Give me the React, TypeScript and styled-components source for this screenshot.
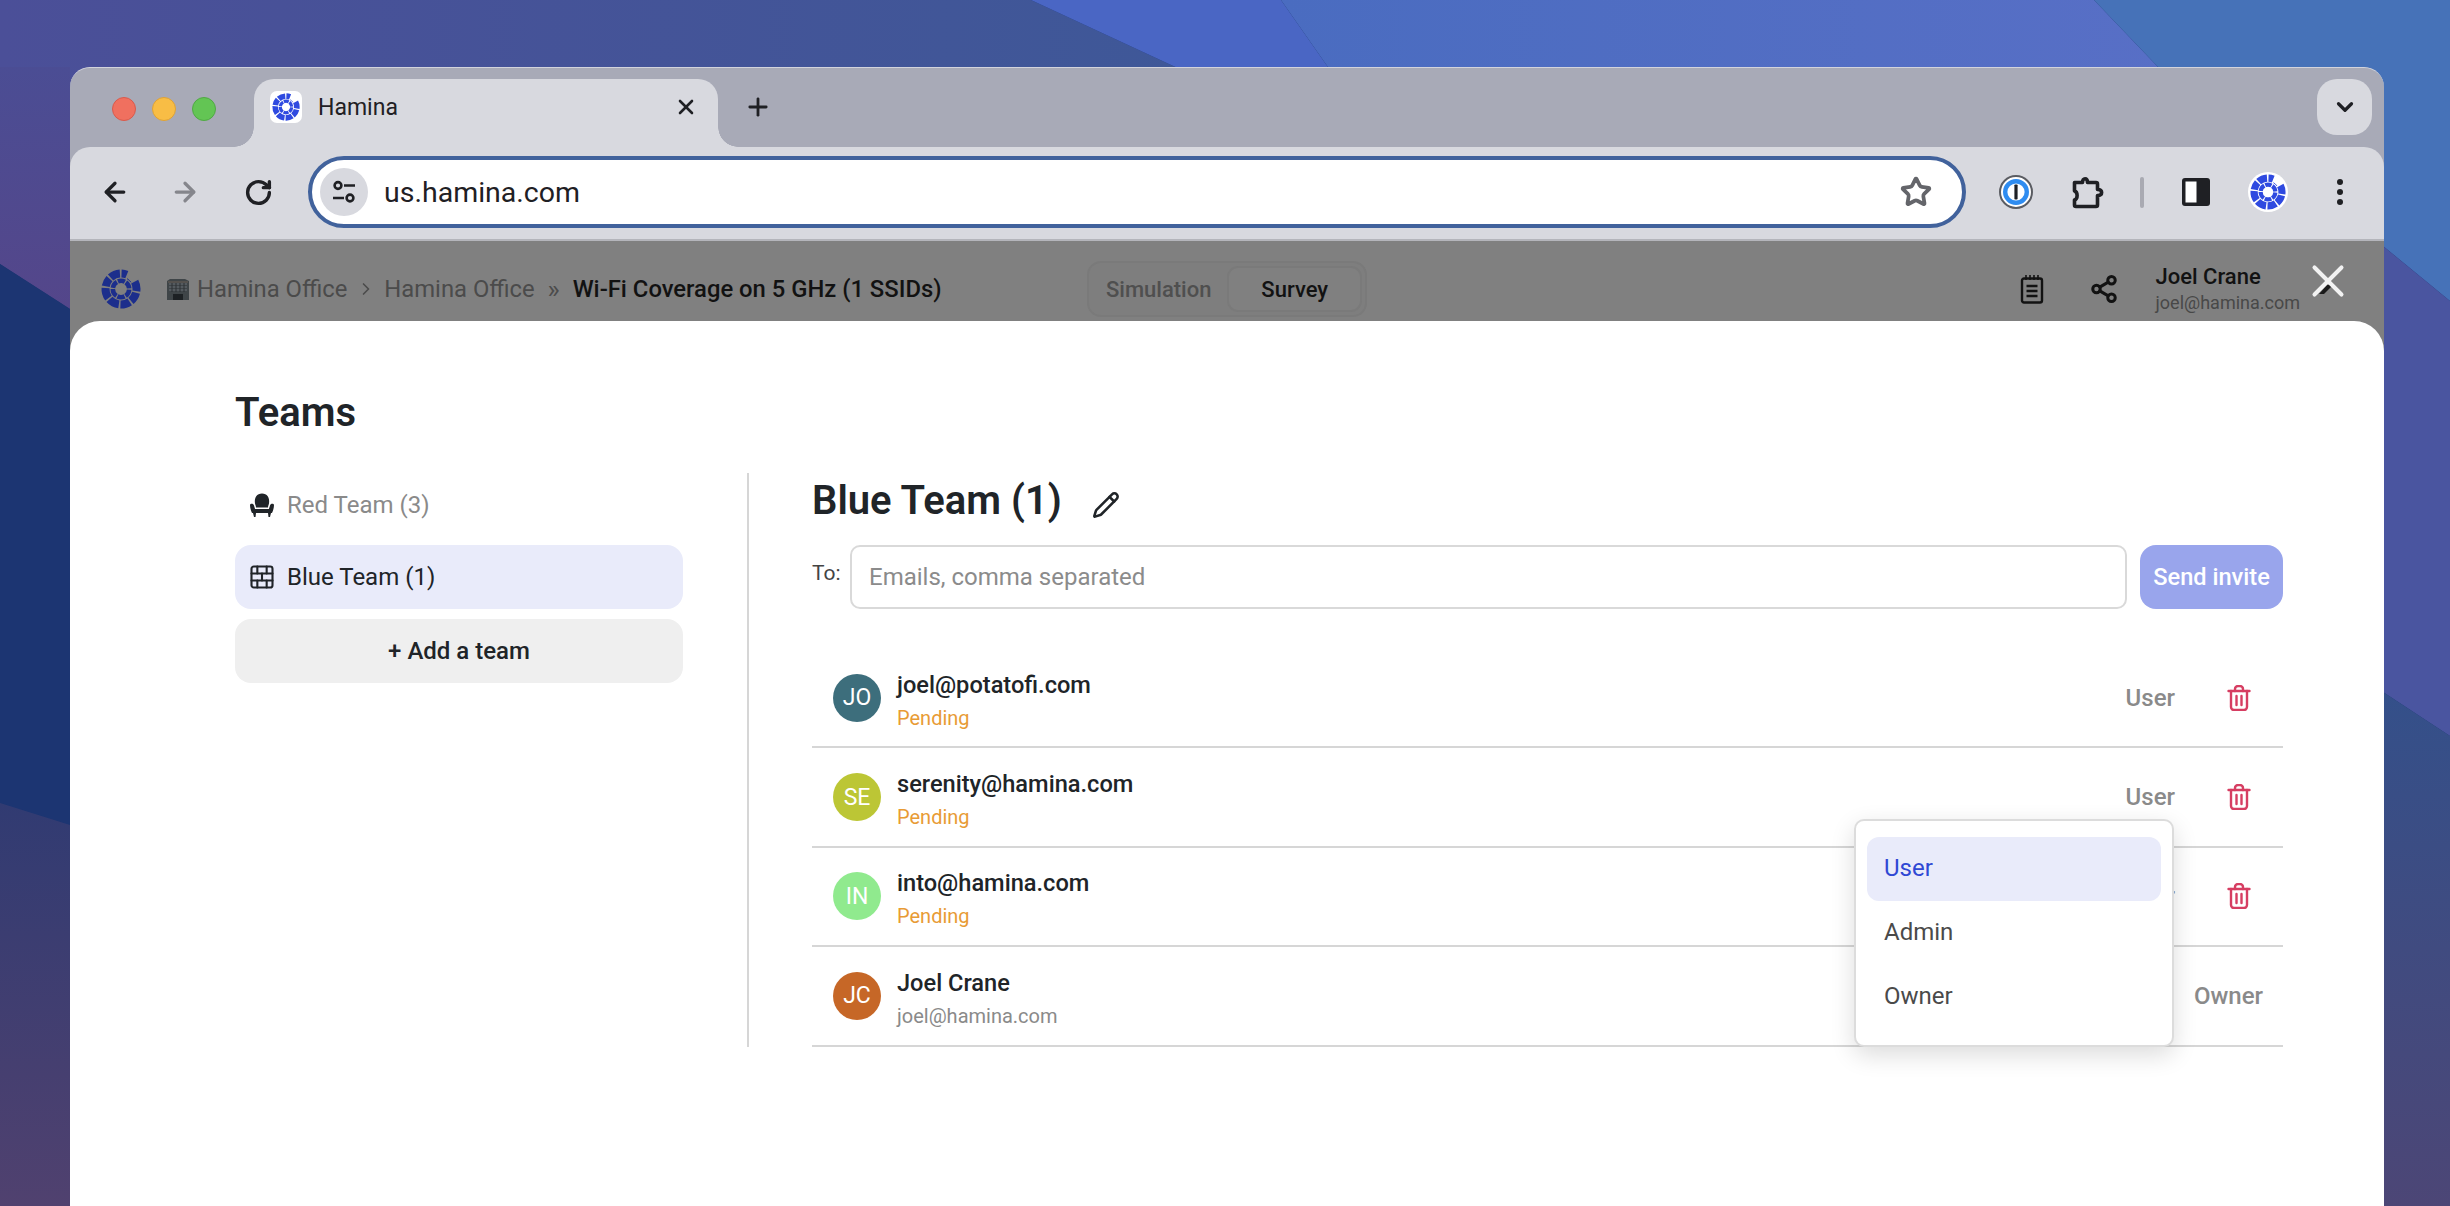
import React from "react";
import styled, { createGlobalStyle } from "styled-components";
import { ArrowLeft, ArrowRight, RotateCw, Star, X, Plus, ChevronDown, ChevronRight, Pencil, Share2, BrickWall } from "lucide-react";

const Global = createGlobalStyle`
  html, body { margin: 0; padding: 0; background: #1c3572; }
  * { box-sizing: border-box; }
  body { font-family: Roboto, "Liberation Sans", sans-serif; }
`;

const Desktop = styled.div`
  position: relative;
  width: 2450px;
  height: 1206px;
  overflow: hidden;
  padding: 67px 66px 0 70px;
`;
const WallpaperSvg = styled.svg`
  position: absolute;
  inset: 0;
`;
const Window = styled.div`
  position: relative;
  width: 2314px;
  height: 1139px;
  display: flex;
  flex-direction: column;
  background: #a8aab7;
  border-top: 1px solid #d3d4dc;
  border-radius: 20px 20px 0 0;
  overflow: hidden;
`;
const TabStrip = styled.div`
  height: 79px;
  flex: none;
  display: flex;
  align-items: flex-start;
  padding: 11px 12px 0 42px;
`;
const Lights = styled.div`
  display: flex;
  gap: 16px;
  margin-top: 18px;
`;
const Light = styled.span<{ $c: string; $b: string }>`
  width: 24px;
  height: 24px;
  border-radius: 50%;
  background: ${(p) => p.$c};
  border: 1px solid ${(p) => p.$b};
`;
const Tab = styled.div`
  position: relative;
  z-index: 1;
  width: 464px;
  height: 68px;
  margin-left: 38px;
  padding: 0 20px 12px 16px;
  display: flex;
  align-items: center;
  background: #d8d9df;
  border-radius: 20px 20px 0 0;
  color: #1f2024;
  font-size: 23px;
  &::before, &::after {
    content: "";
    position: absolute;
    bottom: 0;
    width: 20px;
    height: 20px;
  }
  &::before { left: -20px; background: radial-gradient(circle at 0 0, #a8aab7 19.5px, #d8d9df 20px); }
  &::after { right: -20px; background: radial-gradient(circle at 100% 0, #a8aab7 19.5px, #d8d9df 20px); }
`;
const Favicon = styled.span<{ $round?: boolean }>`
  width: ${(p) => (p.$round ? 40 : 32)}px;
  height: ${(p) => (p.$round ? 40 : 32)}px;
  border-radius: ${(p) => (p.$round ? "50%" : "7px")};
  background: #fff;
  display: flex;
  align-items: center;
  justify-content: center;
  flex: none;
`;
const TabTitle = styled.span`
  margin-left: 16px;
  flex: 1;
`;
const NewTab = styled.span`
  margin: 14px 0 0 26px;
  height: 28px;
  display: flex;
  align-items: center;
  color: #1f2024;
`;
const TabSearch = styled.span`
  margin-left: auto;
  width: 55px;
  height: 56px;
  border-radius: 20px;
  background: #d8d9df;
  display: flex;
  align-items: center;
  justify-content: center;
  color: #1f2024;
`;
const Toolbar = styled.div`
  position: relative;
  height: 94px;
  flex: none;
  display: flex;
  align-items: center;
  padding: 0 0 2px 17px;
  background: #d8d9df;
  border-bottom: 2px solid #b4b5bb;
  border-radius: 20px 20px 0 0;
`;
const NavButton = styled.span<{ $c?: string; $ml?: number }>`
  width: 56px;
  height: 56px;
  display: flex;
  align-items: center;
  justify-content: center;
  color: ${(p) => p.$c || "#1f2024"};
  margin-left: ${(p) => p.$ml || 0}px;
`;
const Omnibox = styled.div`
  width: 1658px;
  height: 72px;
  margin-left: 22px;
  border: 4px solid #41629c;
  border-radius: 36px;
  background: #fff;
  display: flex;
  align-items: center;
  padding: 0 30px 0 8px;
`;
const SiteChip = styled.span`
  width: 48px;
  height: 48px;
  border-radius: 50%;
  background: #d8d9df;
  display: flex;
  align-items: center;
  justify-content: center;
  flex: none;
`;
const UrlText = styled.span`
  margin-left: 16px;
  flex: 1;
  font-size: 28.500px;
  color: #1f2024;
`;
const ToolSlots = styled.div`
  display: flex;
  align-items: center;
  margin-left: 14px;
`;
const ToolSlot = styled.span`
  width: 72px;
  height: 56px;
  display: flex;
  align-items: center;
  justify-content: center;
  color: #1f2024;
`;
const ToolSep = styled.span`
  width: 4px;
  height: 31px;
  background: #a9aab2;
  border-radius: 2px;
  margin: 0 16px;
`;
const AppBody = styled.div`
  flex: 1;
  display: flex;
  flex-direction: column;
  background: #808080;
  min-height: 0;
`;
const AppHeader = styled.header`
  position: relative;
  height: 80px;
  flex: none;
  display: flex;
  align-items: center;
  padding: 16px 84px 0 31px;
`;
const Crumbs = styled.div`
  display: flex;
  align-items: center;
  margin-left: 25px;
  font-size: 23.800px;
  color: #4b4b4b;
  width: 777px;
  flex: none;
  white-space: nowrap;
`;
const CrumbLabel = styled.span<{ $ml?: number }>`
  margin-left: ${(p) => p.$ml || 0}px;
  flex: none;
`;
const CrumbSep = styled.span<{ $w: number }>`
  width: ${(p) => p.$w}px;
  flex: none;
  display: flex;
  justify-content: center;
  font-size: 26px;
  line-height: 24px;
`;
const CrumbCurrent = styled.span`
  color: #121212;
  font-weight: 500;
  flex: none;
`;
const Segmented = styled.div`
  margin-left: 144px;
  width: 280px;
  height: 56px;
  padding: 3px 3px 3px 1px;
  display: flex;
  align-items: stretch;
  background: #7e7e7e;
  border: 2px solid #7a7a7a;
  border-radius: 14px;
  font-size: 22px;
  font-weight: 500;
`;
const SegItem = styled.span<{ $active?: boolean }>`
  display: flex;
  align-items: center;
  justify-content: center;
  width: ${(p) => (p.$active ? "136px" : "139px")};
  color: ${(p) => (p.$active ? "#121212" : "#4f4f4f")};
  background: ${(p) => (p.$active ? "#808080" : "transparent")};
  border: ${(p) => (p.$active ? "2px solid #7a7a7a" : "0")};
  border-radius: 11px;
`;
const HeaderActions = styled.div`
  margin-left: auto;
  display: flex;
  align-items: center;
  color: #121212;
`;
const HeaderIcon = styled.span`
  width: 72px;
  display: flex;
  justify-content: center;
`;
const HeaderUser = styled.div`
  margin-left: 16px;
  display: flex;
  flex-direction: column;
  line-height: 1;
`;
const HeaderName = styled.span`
  font-size: 22px;
  font-weight: 500;
  color: #121212;
  margin-bottom: 6px;
`;
const HeaderMail = styled.span`
  font-size: 18px;
  color: #484848;
`;
const HiddenAvatarMark = styled.span`
  position: absolute;
  right: 51px;
  top: 44px;
  width: 14px;
  height: 9px;
  display: flex;
`;
const ModalClose = styled.span`
  position: absolute;
  right: 29px;
  top: 13px;
  width: 54px;
  height: 54px;
  color: #f2f2f2;
`;
const Modal = styled.main`
  flex: 1;
  background: #fff;
  border-radius: 30px 30px 0 0;
  padding: 69px 101px 0 165px;
  color: #202428;
`;
const PageTitle = styled.h1`
  margin: 0 0 37px;
  font-size: 40px;
  line-height: 46px;
  font-weight: 600;
  color: #202428;
`;
const Columns = styled.div`
  display: flex;
  align-items: flex-start;
`;
const TeamColumn = styled.nav`
  width: 448px;
  margin-right: 64px;
  display: flex;
  flex-direction: column;
`;
const TeamItem = styled.div<{ $active?: boolean }>`
  height: 64px;
  margin-bottom: 8px;
  border-radius: 16px;
  display: flex;
  align-items: center;
  padding-left: 13px;
  gap: 11px;
  font-size: 24px;
  color: ${(p) => (p.$active ? "#202428" : "#8a8a8a")};
  background: ${(p) => (p.$active ? "#e9ebfa" : "transparent")};
`;
const AddTeam = styled.div`
  height: 64px;
  margin-top: 2px;
  border-radius: 16px;
  background: #efefef;
  display: flex;
  align-items: center;
  justify-content: center;
  font-size: 24px;
  font-weight: 500;
  color: #202428;
`;
const TeamIcon = styled.span`
  width: 28px;
  display: flex;
  justify-content: center;
  color: #202428;
`;
const TeamPane = styled.section`
  flex: 1;
  border-left: 2px solid #d6d6d6;
  padding-left: 63px;
  height: 574px;
`;
const PaneTitleRow = styled.div`
  height: 54px;
  display: flex;
  align-items: center;
  margin-bottom: 18px;
  color: #202428;
`;
const PaneTitle = styled.h2`
  margin: 1px 0 0;
  font-size: 40px;
  font-weight: 600;
  line-height: 53px;
`;
const EditIcon = styled.span`
  margin-left: 30px;
  margin-top: 10px;
  display: flex;
`;
const InviteRow = styled.div`
  height: 64px;
  display: flex;
  align-items: stretch;
`;
const ToLabel = styled.span`
  width: 38px;
  font-size: 21px;
  line-height: 57px;
  color: #444;
  height: 57px;
`;
const EmailField = styled.div`
  flex: 1;
  border: 2px solid #d9d9d9;
  border-radius: 10px;
  display: flex;
  align-items: center;
  padding-left: 17px;
  font-size: 24px;
  color: #8b8b8b;
`;
const SendButton = styled.button`
  width: 143px;
  margin-left: 13px;
  border: 0;
  border-radius: 16px;
  background: #99a5ec;
  color: #fff;
  font: 500 23.600px Roboto, sans-serif;
  padding: 0;
`;
const MemberList = styled.div`
  position: relative;
  margin-top: 40px;
`;
const MemberRow = styled.div`
  height: 99.4px;
  border-bottom: 2px solid #d6d6d6;
  display: flex;
  align-items: center;
  padding: 0 20px 0 21px;
`;
const Avatar = styled.span<{ $c: string }>`
  width: 48px;
  height: 48px;
  border-radius: 50%;
  flex: none;
  background: ${(p) => p.$c};
  color: #fff;
  display: flex;
  align-items: center;
  justify-content: center;
  font-size: 23px;
  font-weight: 400;
`;
const MemberText = styled.div`
  margin-left: 16px;
  padding-top: 8px;
  display: flex;
  flex-direction: column;
`;
const MemberName = styled.span`
  font-size: 23.600px;
  font-weight: 500;
  line-height: 30px;
  color: #202428;
`;
const MemberSub = styled.span<{ $pending?: boolean }>`
  font-size: 20px;
  line-height: 32px;
  margin-top: 2px;
  color: ${(p) => (p.$pending ? "#e89b35" : "#8a8a8a")};
`;
const Role = styled.span`
  margin-left: auto;
  font-size: 24px;
  font-weight: 500;
  color: #8a8a8a;
`;
const TrashButton = styled.span`
  width: 32px;
  margin: 0 8px 0 48px;
  display: flex;
  justify-content: center;
  color: #d63e62;
`;
const RoleMenu = styled.div`
  position: absolute;
  top: 170px;
  left: 1042px;
  width: 320px;
  height: 228px;
  padding: 16px 11px;
  background: #fff;
  border: 2px solid #dcdcdc;
  border-radius: 10px;
  box-shadow: 0 8px 24px rgba(0, 0, 0, 0.14);
`;
const RoleOption = styled.div<{ $active?: boolean }>`
  height: 64px;
  display: flex;
  align-items: center;
  padding: 0 17px 3px;
  border-radius: 12px;
  font-size: 24px;
  color: ${(p) => (p.$active ? "#2f48d4" : "#4a4a4a")};
  background: ${(p) => (p.$active ? "#e9ebfa" : "transparent")};
`;

const arc = (r: number, a0: number, a1: number) => {
  const p = (a: number) => {
    const t = ((a - 90) * Math.PI) / 180;
    return `${(20 + r * Math.cos(t)).toFixed(2)} ${(20 + r * Math.sin(t)).toFixed(2)}`;
  };
  return `M${p(a0)}A${r} ${r} 0 0 1 ${p(a1)}`;
};
const OUTER: [number, number][] = [[-42, -4], [2, 22], [62, 98], [104, 140], [146, 182], [188, 228], [234, 274], [280, 312]];
const INNER: [number, number][] = [[-22, 28], [36, 86], [94, 146], [154, 206], [214, 270], [278, 330]];

const HaminaLogo = ({ size, color }: { size: number; color: string }) => (
  <svg width={size} height={size} viewBox="0 0 40 40" fill="none" stroke={color}>
    {OUTER.map(([a, b]) => (
      <path key={`o${a}`} d={arc(15.5, a, b)} strokeWidth={8} />
    ))}
    <path d={arc(12, 30, 56)} strokeWidth={1} />
    {INNER.map(([a, b]) => (
      <path key={`i${a}`} d={arc(8.2, a, b)} strokeWidth={4.6} />
    ))}
  </svg>
);

const TuneIcon = () => (
  <svg width="32" height="32" viewBox="0 0 32 32" fill="none" stroke="#1f2024" strokeWidth="2.6">
    <circle cx="10" cy="9.5" r="3.4" />
    <path d="M16 9.5h11M5 22h11" />
    <circle cx="22" cy="22" r="3.4" />
  </svg>
);
const OnePassword = () => (
  <svg width="34" height="34" viewBox="0 0 34 34">
    <circle cx="17" cy="17" r="16" fill="#fff" stroke="#5a5c62" strokeWidth="2" />
    <circle cx="17" cy="17" r="10.8" fill="#fff" stroke="#2f8cf0" strokeWidth="4.4" />
    <rect x="15.4" y="9.5" width="3.2" height="15" rx="0.8" fill="#1f2024" />
  </svg>
);
const PuzzleIcon = () => (
  <svg width="36" height="36" viewBox="0 0 36 36" fill="none" stroke="#1f2024" strokeWidth="3.6" strokeLinejoin="round">
    <path d="M4.500 8.500h8c0-5 5-5 5 0h8.500a1.500 1.500 0 0 1 1.500 1.500v5.500c5.500 0 5.500 6 0 6v9.500a1.500 1.500 0 0 1-1.500 1.500H6a1.500 1.500 0 0 1-1.500-1.500v-5c3.500-1 3.500-8 0-9z" />
  </svg>
);
const SidePanelIcon = () => (
  <svg width="30" height="30" viewBox="0 0 30 30">
    <rect x="1" y="1" width="28" height="28" rx="3" fill="#1f2024" />
    <rect x="4.500" y="4.500" width="11" height="21" fill="#fff" />
  </svg>
);
const KebabIcon = () => (
  <svg width="10" height="30" viewBox="0 0 10 30" fill="#1f2024">
    <circle cx="5" cy="5" r="3" />
    <circle cx="5" cy="15" r="3" />
    <circle cx="5" cy="25" r="3" />
  </svg>
);
const BuildingIcon = () => (
  <svg width="24" height="23" viewBox="0 0 24 23">
    <path d="M1 3l3-2h15l4 2v19H1z" fill="#3f4548" />
    <path d="M2 4h20" stroke="#5d5650" strokeWidth="1.500" />
    {[6, 9, 12].map((y) => (
      <path key={y} d={`M3 ${y}h18`} stroke="#6a7176" strokeWidth="1" />
    ))}
    {[6, 10, 14, 18].map((x) => (
      <path key={x} d={`M${x} 5v9`} stroke="#2c3134" strokeWidth="1" />
    ))}
    <rect x="7" y="16" width="10" height="6" fill="#1d2124" />
  </svg>
);
const NotesIcon = () => (
  <svg width="24" height="30" viewBox="0 0 24 30" fill="none" stroke="#121212" strokeWidth="2.400">
    <rect x="2" y="4.500" width="20" height="24" rx="2" />
    <path d="M6 1v5M10 1v5M14 1v5M18 1v5" strokeWidth="1.600" />
    <path d="M6.500 12h11M6.500 17h11M6.500 22h11" strokeWidth="2.600" />
  </svg>
);
const ArmchairIcon = () => (
  <svg width="26" height="26" viewBox="0 0 26 26" fill="currentColor">
    <path d="M6 11.500C5 5.500 8 1.500 13 1.500s8 4 7 10c-.3 1.500-1 2.500-1 4H7c0-1.500-.7-2.500-1-4z" />
    <path d="M1 13c0-1.500 3.500-2 4 .5.3 1.500 1 2.800 1 3.500h14c0-.7.700-2 1-3.500.5-2.500 4-2 4-.5 0 3-1 6-2 8H3c-1-2-2-5-2-8z" />
    <path d="M4 21h3l-.5 4H5zM19 21h3l-1 4h-1.500z" />
  </svg>
);
const TrashIcon = () => (
  <svg width="24" height="26" viewBox="0 0 24 26" fill="none" stroke="currentColor" strokeWidth="2.400" strokeLinecap="round">
    <path d="M1.500 6h21" />
    <path d="M8 6V4a3 3 0 0 1 3-3h2a3 3 0 0 1 3 3v2" />
    <path d="M4 6v16a3 3 0 0 0 3 3h10a3 3 0 0 0 3-3V6" />
    <path d="M9.500 11v9M14.500 11v9" />
  </svg>
);

const Wallpaper = () => (
  <WallpaperSvg width="2450" height="1206" viewBox="0 0 2450 1206">
    <defs>
      <linearGradient id="wA" x1="0" x2="1" y1="0" y2="0">
        <stop offset="0" stopColor="#4b4f98" />
        <stop offset="1" stopColor="#3e5898" />
      </linearGradient>
      <linearGradient id="wC" x1="0" x2="1" y1="0" y2="0">
        <stop offset="0" stopColor="#4a6cc0" />
        <stop offset="1" stopColor="#586fc6" />
      </linearGradient>
      <linearGradient id="wL" x1="0" x2="0" y1="0" y2="1">
        <stop offset="0" stopColor="#4b4d94" />
        <stop offset="1" stopColor="#54468a" />
      </linearGradient>
      <linearGradient id="wB" x1="0" x2="0" y1="0" y2="1">
        <stop offset="0" stopColor="#313b72" />
        <stop offset="1" stopColor="#50416f" />
      </linearGradient>
      <linearGradient id="wR" x1="0" x2="0" y1="0" y2="1">
        <stop offset="0" stopColor="#34508a" />
        <stop offset="1" stopColor="#4c4676" />
      </linearGradient>
    </defs>
    <polygon points="0,0 1031,0 1225,90 0,90" fill="url(#wA)" />
    <polygon points="0,67 70,67 70,309 0,264" fill="url(#wL)" />
    <polygon points="0,264 70,309 70,825 0,803" fill="#1c3572" />
    <polygon points="0,803 70,825 70,1206 0,1206" fill="url(#wB)" />
    <polygon points="1031,0 1281,0 1344,90 1225,90" fill="#4a66c4" />
    <polygon points="1281,0 2094,0 2180,90 1344,90" fill="url(#wC)" />
    <polygon points="2094,0 2450,0 2450,301 2383,246 2383,90 2180,90" fill="#4672b8" />
    <polygon points="2383,246 2450,301 2450,736 2383,692" fill="#4a55a0" />
    <polygon points="2383,692 2450,736 2450,1206 2383,1206" fill="url(#wR)" />
  </WallpaperSvg>
);

const members = [
  { i: "JO", c: "#3d6e7c", name: "joel@potatofi.com", role: "User" },
  { i: "SE", c: "#bcc635", name: "serenity@hamina.com", role: "User" },
  { i: "IN", c: "#90ea8e", name: "into@hamina.com", role: "User" },
];

export default function App() {
  return (
    <>
      <Global />
      <Desktop>
        <Wallpaper />
        <Window>
          <TabStrip>
            <Lights>
              <Light $c="#f0705f" $b="#d85a4c" />
              <Light $c="#f8bd45" $b="#dea236" />
              <Light $c="#63c554" $b="#50a944" />
            </Lights>
            <Tab>
              <Favicon>
                <HaminaLogo size={28} color="#2f4ae0" />
              </Favicon>
              <TabTitle>Hamina</TabTitle>
              <X size={24} strokeWidth={2.6} />
            </Tab>
            <NewTab>
              <Plus size={28} strokeWidth={2.4} />
            </NewTab>
            <TabSearch>
              <ChevronDown size={26} strokeWidth={3} />
            </TabSearch>
          </TabStrip>
          <Toolbar>
            <NavButton>
              <ArrowLeft size={30} strokeWidth={2.6} />
            </NavButton>
            <NavButton $c="#85868c" $ml={14}>
              <ArrowRight size={30} strokeWidth={2.6} />
            </NavButton>
            <NavButton $ml={17}>
              <RotateCw size={29} strokeWidth={2.8} />
            </NavButton>
            <Omnibox>
              <SiteChip>
                <TuneIcon />
              </SiteChip>
              <UrlText>us.hamina.com</UrlText>
              <Star size={32} strokeWidth={2.8} color="#64656a" />
            </Omnibox>
            <ToolSlots>
              <ToolSlot>
                <OnePassword />
              </ToolSlot>
              <ToolSlot>
                <PuzzleIcon />
              </ToolSlot>
              <ToolSep />
              <ToolSlot>
                <SidePanelIcon />
              </ToolSlot>
              <ToolSlot>
                <Favicon $round>
                  <HaminaLogo size={36} color="#2f4ae0" />
                </Favicon>
              </ToolSlot>
              <ToolSlot>
                <KebabIcon />
              </ToolSlot>
            </ToolSlots>
          </Toolbar>
          <AppBody>
            <AppHeader>
              <HaminaLogo size={40} color="#1c2e8c" />
              <Crumbs>
                <BuildingIcon />
                <CrumbLabel $ml={7}>Hamina Office</CrumbLabel>
                <CrumbSep $w={37}>
                  <ChevronRight size={20} strokeWidth={2} />
                </CrumbSep>
                <CrumbLabel>Hamina Office</CrumbLabel>
                <CrumbSep $w={38}>»</CrumbSep>
                <CrumbCurrent>Wi-Fi Coverage on 5 GHz (1 SSIDs)</CrumbCurrent>
              </Crumbs>
              <Segmented>
                <SegItem>Simulation</SegItem>
                <SegItem $active>Survey</SegItem>
              </Segmented>
              <HeaderActions>
                <HeaderIcon>
                  <NotesIcon />
                </HeaderIcon>
                <HeaderIcon>
                  <Share2 size={30} strokeWidth={2.4} />
                </HeaderIcon>
                <HeaderUser>
                  <HeaderName>Joel Crane</HeaderName>
                  <HeaderMail>joel@hamina.com</HeaderMail>
                </HeaderUser>
              </HeaderActions>
              <HiddenAvatarMark>
                <svg width="14" height="9" viewBox="0 0 14 9" fill="#1a1a1a">
                  <path d="M0 9L8 0h6L5 9z" />
                </svg>
              </HiddenAvatarMark>
              <ModalClose>
                <X size={54} strokeWidth={1.8} />
              </ModalClose>
            </AppHeader>
            <Modal>
              <PageTitle>Teams</PageTitle>
              <Columns>
                <TeamColumn>
                  <TeamItem>
                    <TeamIcon>
                      <ArmchairIcon />
                    </TeamIcon>
                    Red Team (3)
                  </TeamItem>
                  <TeamItem $active>
                    <TeamIcon>
                      <BrickWall size={34} strokeWidth={1.8} />
                    </TeamIcon>
                    Blue Team (1)
                  </TeamItem>
                  <AddTeam>+ Add a team</AddTeam>
                </TeamColumn>
                <TeamPane>
                  <PaneTitleRow>
                    <PaneTitle>Blue Team (1)</PaneTitle>
                    <EditIcon>
                      <Pencil size={28} strokeWidth={2.2} />
                    </EditIcon>
                  </PaneTitleRow>
                  <InviteRow>
                    <ToLabel>To:</ToLabel>
                    <EmailField>Emails, comma separated</EmailField>
                    <SendButton>Send invite</SendButton>
                  </InviteRow>
                  <MemberList>
                    {members.map((m) => (
                      <MemberRow key={m.i}>
                        <Avatar $c={m.c}>{m.i}</Avatar>
                        <MemberText>
                          <MemberName>{m.name}</MemberName>
                          <MemberSub $pending>Pending</MemberSub>
                        </MemberText>
                        <Role>{m.role}</Role>
                        <TrashButton>
                          <TrashIcon />
                        </TrashButton>
                      </MemberRow>
                    ))}
                    <MemberRow>
                      <Avatar $c="#c66727">JC</Avatar>
                      <MemberText>
                        <MemberName>Joel Crane</MemberName>
                        <MemberSub>joel@hamina.com</MemberSub>
                      </MemberText>
                      <Role>Owner</Role>
                    </MemberRow>
                    <RoleMenu>
                      <RoleOption $active>User</RoleOption>
                      <RoleOption>Admin</RoleOption>
                      <RoleOption>Owner</RoleOption>
                    </RoleMenu>
                  </MemberList>
                </TeamPane>
              </Columns>
            </Modal>
          </AppBody>
        </Window>
      </Desktop>
    </>
  );
}
